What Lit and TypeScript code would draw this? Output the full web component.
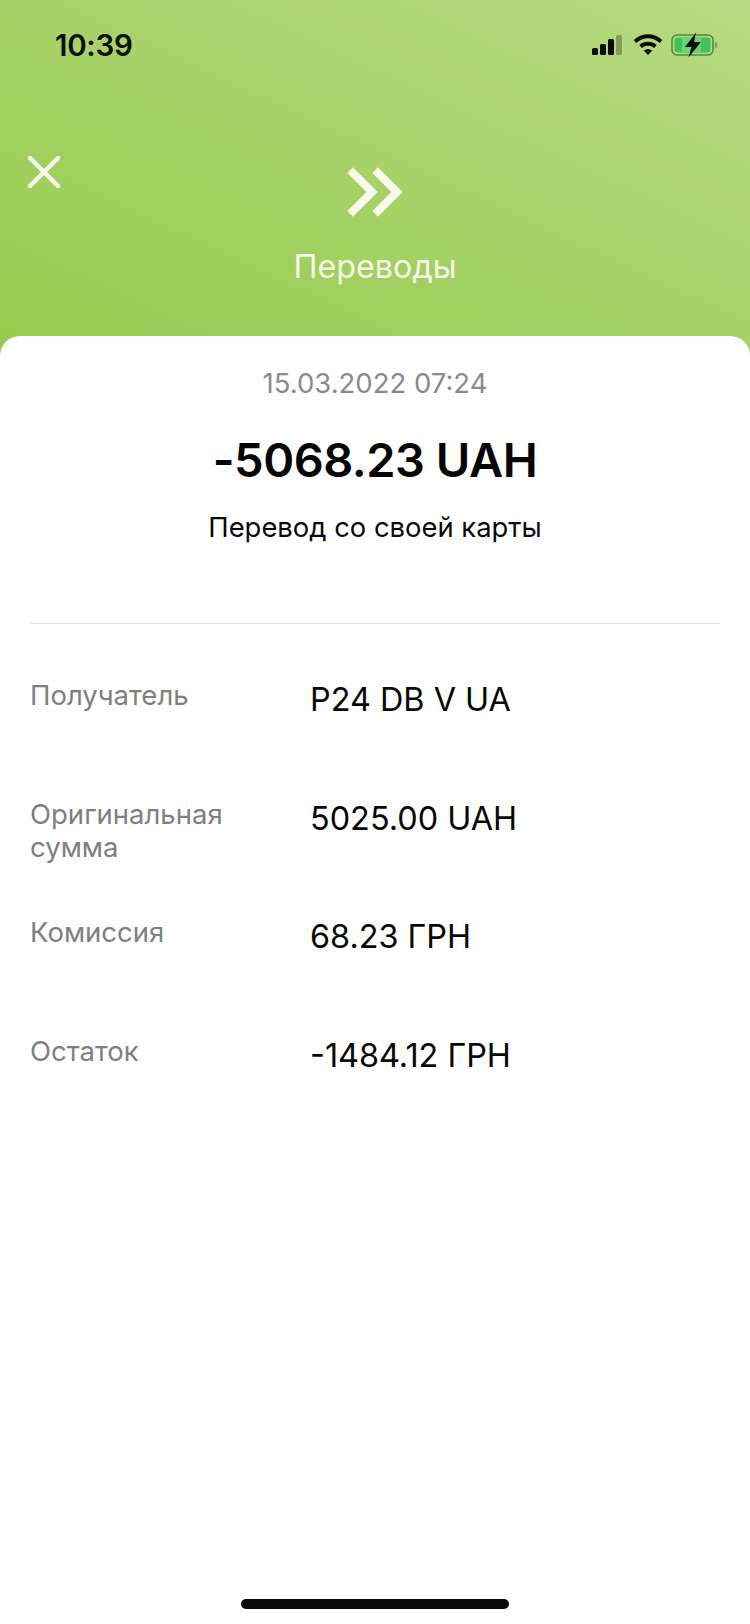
import { LitElement, html, css } from "lit";
import { customElement } from "lit/decorators.js";

const rows = [
  ["Получатель", "P24 DB V UA"],
  ["Оригинальная сумма", "5025.00 UAH"],
  ["Комиссия", "68.23 ГРН"],
  ["Остаток", "-1484.12 ГРН"],
];

@customElement("app-root")
export class AppRoot extends LitElement {
  static styles = css`
    :host { display: block; width: 750px; height: 1624px; overflow: hidden; font-family: Inter, "Noto Sans", sans-serif; }
    .page { position: relative; display: flex; flex-direction: column; height: 1624px; background: #fff linear-gradient(25deg, #97ca4e 0%, #a6d267 50%, #b6db83 100%) no-repeat; background-size: 100% 360px; }
    .status { display: flex; justify-content: space-between; align-items: center; height: 30px; padding: 30px 31px 0 55px; }
    .time { font-size: 29.5px; font-weight: 600; color: #0b0f06; letter-spacing: -0.3px; }
    .sysicons { display: flex; align-items: center; gap: 8px; }
    .sysicons svg { display: block; }
    .head { height: 276px; display: flex; flex-direction: column; align-items: center; position: relative; }
    .close { position: absolute; left: 27px; top: 95px; }
    .logo { margin-top: 107px; display: block; }
    .title { margin-top: 30px; font-size: 32.3px; line-height: 40px; color: #f4f9ea; }
    .card { flex: 1; background: #fff; border-radius: 20px 20px 0 0; display: flex; flex-direction: column; align-items: stretch; }
    .date { margin-top: 28px; text-align: center; font-size: 27.5px; line-height: 38px; color: #8a8a8c; }
    .amount { margin-top: 30px; text-align: center; font-size: 47px; line-height: 56px; font-weight: 600; color: #050505; letter-spacing: -0.5px; }
    .sub { margin-top: 21px; text-align: center; font-size: 27.4px; line-height: 36px; color: #0a0a0a; }
    .divider { margin: 78px 30px 0; height: 1px; background: #dfdfdf; }
    .rows { padding: 56px 30px 0; display: flex; flex-direction: column; }
    .row { display: grid; grid-template-columns: 281px 1fr; height: 118.6px; align-items: start; }
    .label { font-size: 27.5px; line-height: 33px; color: #7f7f81; width: 215px; margin-top: -1px; }
    .value { font-size: 32.4px; line-height: 40px; color: #080808; margin-left: -1px; }
    .bar { position: absolute; left: 241px; bottom: 15px; width: 268px; height: 10px; border-radius: 5px; background: #0a0a0a; }
  `;

  render() {
    return html`
      <div class="page">
        <div class="status">
          <span class="time">10:39</span>
          <div class="sysicons">
            <svg width="34" height="22" viewBox="0 0 34 22">
              <rect x="1" y="14" width="6" height="7" rx="1.5" fill="#0a0f05" />
              <rect x="9" y="10" width="6" height="11" rx="1.5" fill="#0a0f05" />
              <rect x="17" y="5" width="6" height="16" rx="1.5" fill="#0a0f05" />
              <rect x="25" y="1" width="6" height="20" rx="1.5" fill="#7f9c5c" />
            </svg>
            <svg width="30" height="22" viewBox="0 0 30 22" fill="none" stroke="#0a0f05" stroke-width="3.8">
              <path d="M2 7.5C9.5 0.5 20.5 0.5 28 7.5" />
              <path d="M7.5 12.5C11.8 8.8 18.2 8.8 22.5 12.5" />
              <path d="M15 21l-4.2-4.4c2.4-1.8 6-1.8 8.4 0z" fill="#0a0f05" stroke="none" />
            </svg>
            <svg width="48" height="26" viewBox="0 0 48 26" fill="none">
              <rect x="1" y="3" width="41" height="20" rx="5" stroke="#4f8a3c" stroke-width="1.6" />
              <rect x="3.5" y="5.5" width="36" height="15" rx="3" fill="#3fc25c" />
              <rect x="11" y="5.5" width="19" height="15" fill="#6fd07a" />
              <path d="M44.5 9.5c1.6.6 1.6 6.4 0 7z" fill="#4f6b34" />
              <path d="M25 0.5L14 15h6.5L17.5 25.5 30 10h-7z" fill="#0a0f05" />
            </svg>
          </div>
        </div>
        <div class="head">
          <svg class="close" width="34" height="34" viewBox="0 0 34 34" fill="none" stroke="#f6fbee" stroke-width="4.4" stroke-linecap="round">
            <path d="M3 3l28 28M31 3L3 31" />
          </svg>
          <svg class="logo" width="56" height="50" viewBox="0 0 56 50" fill="none" stroke="#f6fbee" stroke-width="8" stroke-linecap="square" stroke-linejoin="miter">
            <path d="M6 6l19 19L6 44" />
            <path d="M31 6l19 19L31 44" />
          </svg>
          <div class="title">Переводы</div>
        </div>
        <div class="card">
          <div class="date">15.03.2022 07:24</div>
          <div class="amount">-5068.23 UAH</div>
          <div class="sub">Перевод со своей карты</div>
          <div class="divider"></div>
          <div class="rows">
            ${rows.map(
              ([l, v]) => html`<div class="row"><div class="label">${l}</div><div class="value">${v}</div></div>`
            )}
          </div>
        </div>
        <div class="bar"></div>
      </div>
    `;
  }
}
